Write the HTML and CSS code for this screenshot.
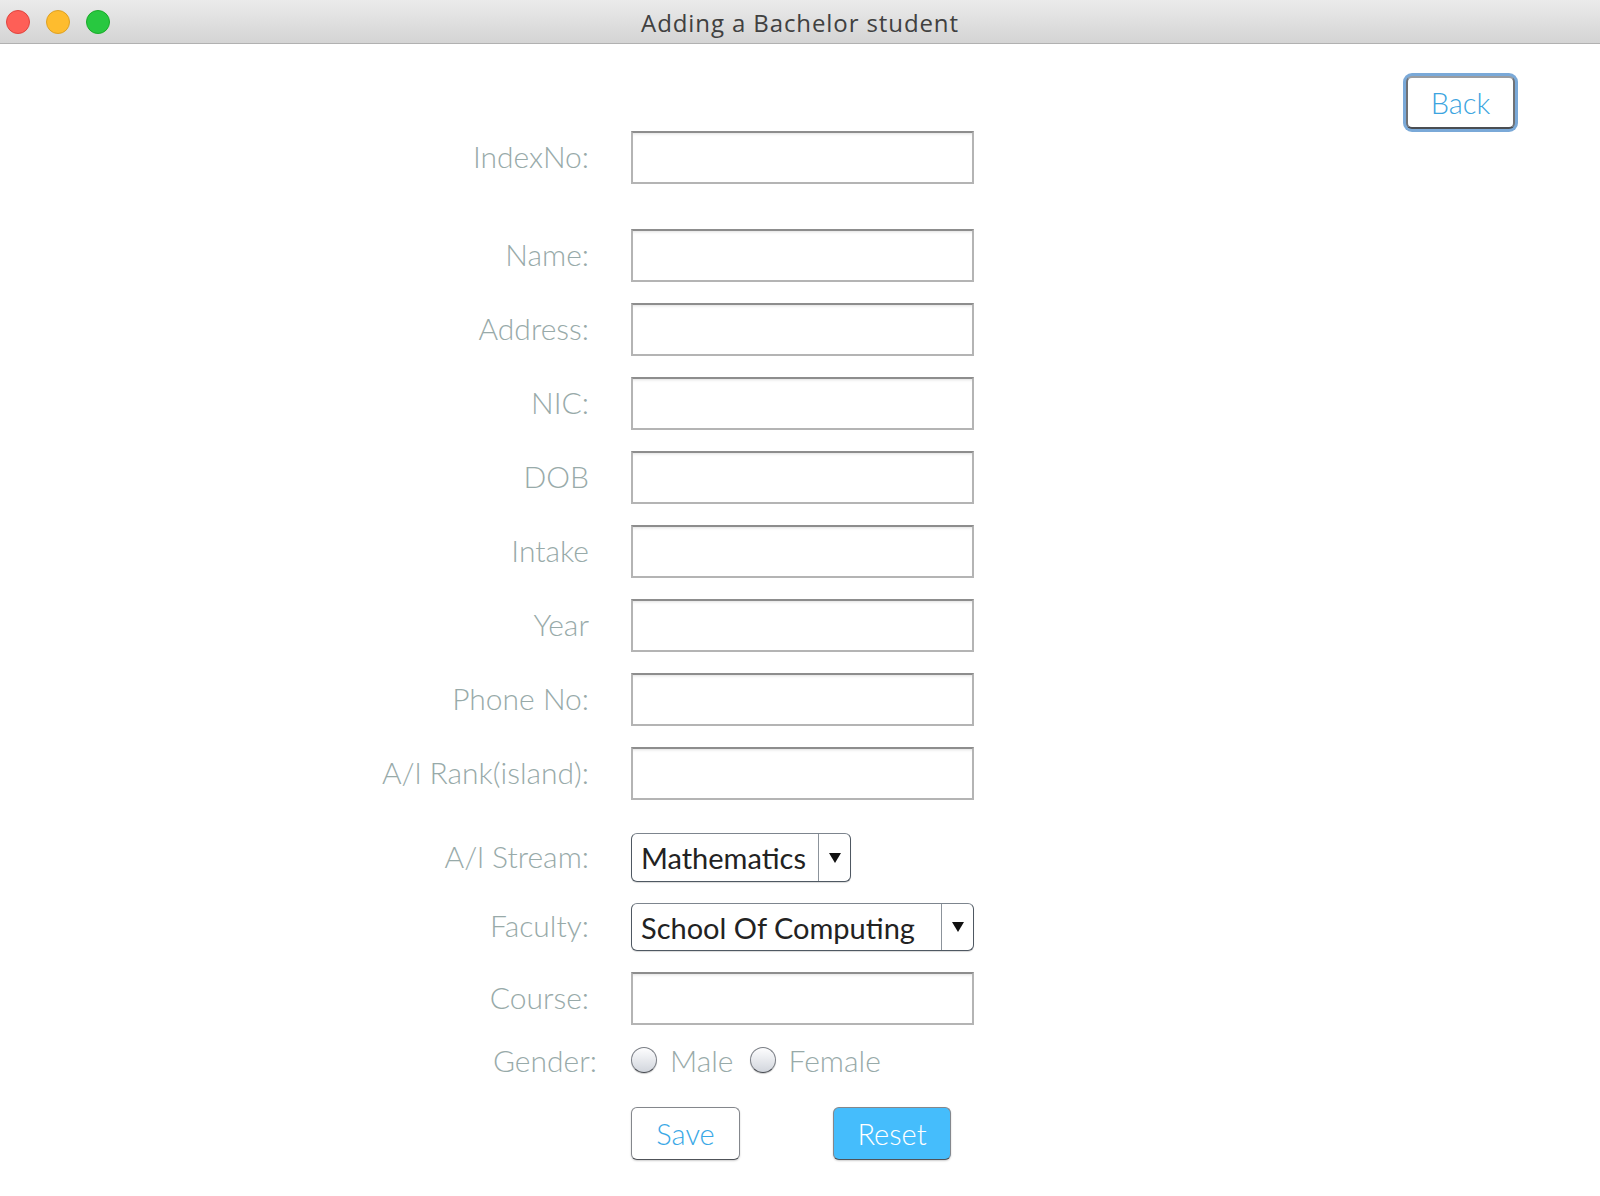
FILE: index.html
```html
<!DOCTYPE html>
<html lang="en">
<head>
<meta charset="utf-8">
<title>Adding a Bachelor student</title>
<link rel="stylesheet" href="styles.css">
</head>
<body>
<div class="window">
  <header class="titlebar">
    <div class="lights">
      <span class="light red"></span>
      <span class="light yellow"></span>
      <span class="light green"></span>
    </div>
    <div class="title">Adding a Bachelor student</div>
  </header>
  <main class="content">
    <form class="form">
      <label class="lbl">IndexNo:</label><input class="field" type="text">
      <label class="lbl gap-name">Name:</label><input class="field gap-name" type="text">
      <label class="lbl">Address:</label><input class="field" type="text">
      <label class="lbl">NIC:</label><input class="field" type="text">
      <label class="lbl">DOB</label><input class="field" type="text">
      <label class="lbl">Intake</label><input class="field" type="text">
      <label class="lbl">Year</label><input class="field" type="text">
      <label class="lbl">Phone No:</label><input class="field" type="text">
      <label class="lbl">A/l Rank(island):</label><input class="field" type="text">
      <label class="lbl gap-stream">A/l Stream:</label>
      <div class="combo combo-short gap-stream"><span class="combo-text">Mathematics</span><span class="combo-arrow"><span class="tri"></span></span></div>
      <label class="lbl">Faculty:</label>
      <div class="combo combo-full"><span class="combo-text">School Of Computing</span><span class="combo-arrow"><span class="tri"></span></span></div>
      <label class="lbl">Course:</label><input class="field" type="text">
      <label class="lbl lbl-gender gap-gender">Gender:</label>
      <div class="radios gap-gender">
        <span class="radio"><span class="dot"></span>Male</span>
        <span class="radio"><span class="dot"></span>Female</span>
      </div>
      <div class="spacer gap-buttons"></div>
      <div class="buttons gap-buttons">
        <button type="button" class="btn btn-save">Save</button>
        <button type="button" class="btn btn-reset">Reset</button>
      </div>
    </form>
    <aside class="aside">
      <button type="button" class="btn-back">Back</button>
    </aside>
  </main>
</div>
</body>
</html>
```

FILE: styles.css
```css
html, body {
  margin: 0;
  padding: 0;
  background: #ffffff;
}
.window {
  width: 1600px;
  height: 1196px;
  background: #ffffff;
  overflow: hidden;
}
.titlebar {
  height: 43px;
  border-bottom: 1px solid #b1b1b1;
  background: linear-gradient(#ebebeb, #d4d4d4);
  display: flex;
  align-items: center;
  position: relative;
}
.lights {
  display: flex;
  gap: 16px;
  padding-left: 6px;
  position: absolute;
  left: 0;
  top: 10px;
}
.light {
  width: 24px;
  height: 24px;
  border-radius: 50%;
  box-sizing: border-box;
}
.red { background: #fe5f57; border: 1px solid #e0443e; }
.yellow { background: #febc2e; border: 1px solid #dea123; }
.green { background: #28c840; border: 1px solid #1aab29; }
.title {
  flex: 1;
  text-align: center;
  font-family: "Open Sans", "Noto Sans", sans-serif;
  font-size: 24px;
  color: #404040;
  padding-top: 1px;
  letter-spacing: 0.9px;
}
.content {
  display: flex;
  align-items: flex-start;
}
.form {
  display: grid;
  grid-template-columns: 589px 343px;
  column-gap: 42px;
  row-gap: 21px;
  padding-top: 87px;
  align-items: center;
}
.lbl {
  font-family: "Lato", sans-serif;
  font-weight: 300;
  font-size: 30px;
  color: #98aaa9;
  text-align: right;
  white-space: nowrap;
  padding-bottom: 4px;
}
.form .lbl-gender {
  margin-right: -8px;
  padding-bottom: 0;
}
.field {
  box-sizing: border-box;
  width: 343px;
  height: 53px;
  margin: 0;
  padding: 0 10px;
  border: 2px solid #b4b4b4;
  border-top-color: #8d8d8d;
  background: #ffffff;
  box-shadow: inset 0 3px 3px -2px rgba(0, 0, 0, 0.12);
  font-family: "Lato", sans-serif;
  font-size: 28px;
  outline: none;
}
.form .gap-name { margin-top: 24px; }
.form .gap-stream { margin-top: 12px; }
.form .gap-gender { margin-top: -4px; }
.form .gap-buttons { margin-top: 8px; }
.combo {
  box-sizing: border-box;
  height: 49px;
  display: flex;
  align-items: stretch;
  border: 1.5px solid #4f5862;
  border-top-color: #7d858e;
  border-radius: 6px;
  background: #ffffff;
  box-shadow: 0 1px 1px rgba(0, 0, 0, 0.15);
}
.combo-short { width: 220px; }
.combo-full { width: 343px; height: 48px; }
.combo-text {
  flex: 1;
  display: flex;
  align-items: center;
  padding-left: 9px;
  font-family: "Lato", sans-serif;
  font-size: 29px;
  color: #222222;
  white-space: nowrap;
  overflow: hidden;
}
.combo-arrow {
  width: 31px;
  border-left: 1px solid #8c939b;
  display: flex;
  align-items: center;
  justify-content: center;
}
.tri {
  width: 0;
  height: 0;
  border-left: 6px solid transparent;
  border-right: 6px solid transparent;
  border-top: 10px solid #111111;
}
.radios {
  display: flex;
  align-items: center;
  gap: 16px;
  height: 36px;
}
.radio {
  display: flex;
  align-items: center;
  gap: 13px;
  font-family: "Lato", sans-serif;
  font-weight: 300;
  font-size: 30px;
  color: #98aaa9;
}
.dot {
  width: 26px;
  height: 26px;
  box-sizing: border-box;
  border-radius: 50%;
  border: 1.5px solid #7a7e85;
  border-bottom-color: #45494f;
  background: linear-gradient(#fdfdfe, #d2d6dd);
  box-shadow: 0 1px 1px rgba(0, 0, 0, 0.2);
}
.buttons {
  display: flex;
  gap: 93px;
}
.btn {
  box-sizing: border-box;
  height: 53px;
  border-radius: 6px;
  font-family: "Lato", sans-serif;
  font-weight: 300;
  font-size: 29px;
  padding: 0;
  border: 1.5px solid #84878c;
  border-bottom-color: #505359;
  box-shadow: 0 1px 2px rgba(0, 0, 0, 0.2);
}
.btn-save {
  width: 109px;
  background: #ffffff;
  color: #3aa8e6;
}
.btn-reset {
  width: 118px;
  background: #45bdfc;
  color: #ffffff;
}
.aside {
  margin-left: auto;
  padding-top: 32px;
  padding-right: 85px;
}
.btn-back {
  box-sizing: border-box;
  width: 109px;
  height: 53px;
  border-radius: 6px;
  background: #ffffff;
  border: 2px solid #6f7276;
  border-top-color: #9a9da1;
  border-bottom-color: #4a4d52;
  box-shadow: 0 0 0 3px #7aa9d8;
  font-family: "Lato", sans-serif;
  font-weight: 300;
  font-size: 29px;
  color: #3ba4e0;
  padding: 0;
}
```
